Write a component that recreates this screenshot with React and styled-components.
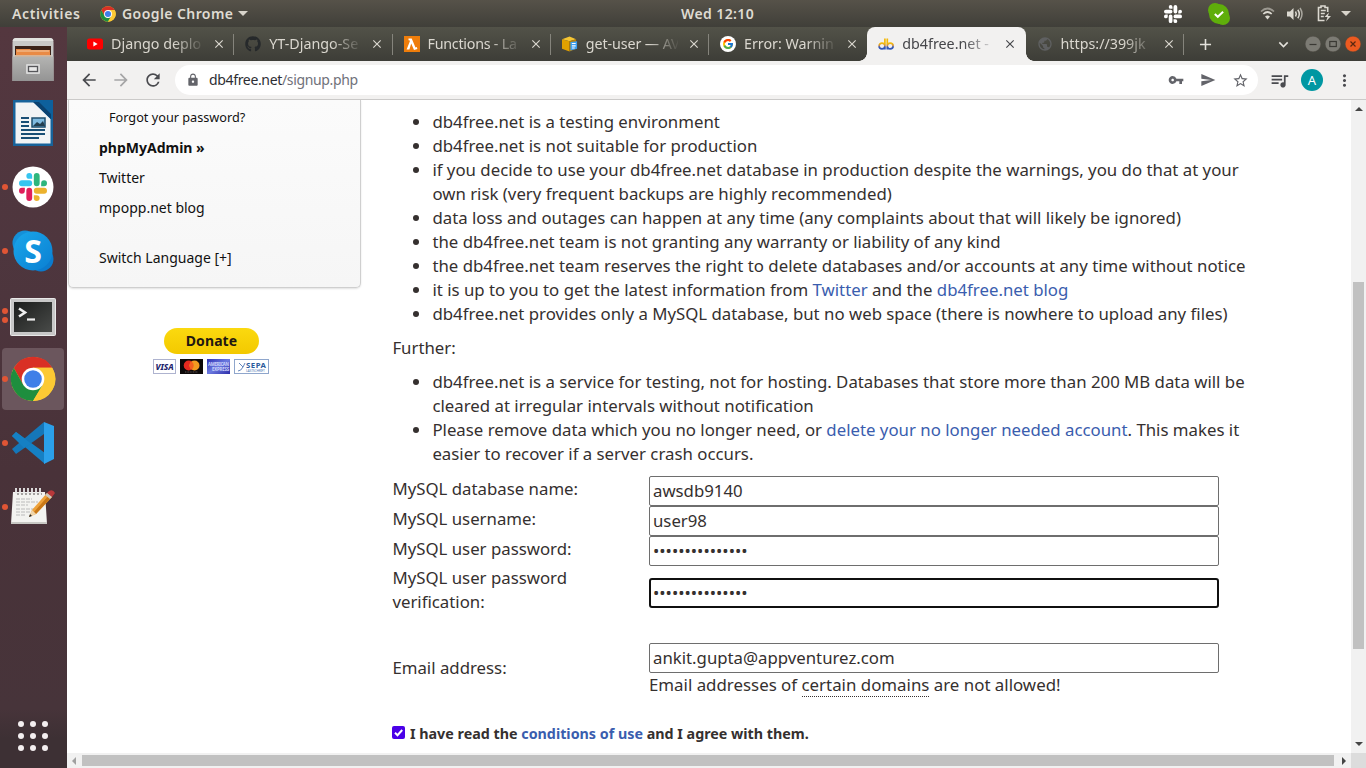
import React from "react";
import styled, { createGlobalStyle, css } from "styled-components";
import {
  MdArrowBack, MdArrowForward, MdRefresh, MdLock, MdVpnKey, MdSend, MdStarBorder,
  MdQueueMusic, MdMoreVert, MdClose, MdAdd, MdPublic, MdKeyboardArrowDown,
} from "react-icons/md";
import { FaGithub } from "react-icons/fa";
import { FcGoogle } from "react-icons/fc";

const Global = createGlobalStyle`
  *, *::before, *::after { box-sizing: border-box; }
  html, body { margin: 0; padding: 0; overflow: hidden; }
  svg { display: block; flex: none; }
`;

const Desktop = styled.div`
  width: 1366px;
  height: 768px;
  display: flex;
  flex-direction: column;
  overflow: hidden;
  font-family: "Noto Sans", sans-serif;
`;

/* ---------- system bar ---------- */
const SystemBar = styled.header`
  height: 27px;
  flex: none;
  display: grid;
  grid-template-columns: 1fr auto 1fr;
  align-items: center;
  background: linear-gradient(#565249, #403f39);
  color: #dfdbd2;
  font-size: 14px;
  line-height: 26px;
  font-weight: 600;
`;
const SystemLeft = styled.div`
  display: flex;
  align-items: center;
  padding-left: 12px;
`;
const SystemRight = styled.div`
  display: flex;
  align-items: center;
  justify-content: flex-end;
  padding-right: 15px;
`;
const Label = styled.span`
  white-space: nowrap;
  letter-spacing: ${(p) => p.$ls || 0}px;
  width: ${(p) => (p.$w ? `${p.$w}px` : "auto")};
  margin-left: ${(p) => p.$ml || 0}px;
`;
const Slot = styled.span`
  display: flex;
  flex: none;
  margin-left: ${(p) => p.$ml || 0}px;
`;

const Body = styled.div`
  flex: 1;
  display: flex;
  min-height: 0;
`;

/* ---------- dock ---------- */
const Dock = styled.nav`
  width: 67px;
  flex: none;
  display: flex;
  flex-direction: column;
  background: linear-gradient(#54373f 0%, #4e363e 30%, #493239 60%, #47343a 92%, #3d3034 96%);
`;
const DockItem = styled.div`
  height: 64px;
  display: grid;
  grid-template-columns: 2px 62px;
  align-items: center;
`;
const DockTile = styled.div`
  grid-column: 2;
  height: 62px;
  display: grid;
  grid-template-columns: 6px 50px 6px;
  align-items: center;
  justify-items: center;
  border-radius: 4px;
  background: ${(p) => (p.$active ? "#6b565d" : "transparent")};
`;
const Dots = styled.div`
  display: flex;
  flex-direction: column;
  gap: 3px;
`;
const Dot = styled.i`
  width: 6px;
  height: 6px;
  border-radius: 50%;
  background: #e05535;
`;
const AppGrid = styled.div`
  margin-top: auto;
  padding: 0 0 17px 18px;
  display: grid;
  grid-template-columns: repeat(3, 6px);
  gap: 6px;
`;
const GridDot = styled.i`
  width: 6px;
  height: 6px;
  border-radius: 50%;
  background: #f4eff0;
`;

/* ---------- browser chrome ---------- */
const Browser = styled.main`
  flex: 1;
  min-width: 0;
  display: flex;
  flex-direction: column;
  background: #fff;
`;
const TabStrip = styled.div`
  height: 34px;
  flex: none;
  display: flex;
  align-items: stretch;
  padding-left: 9px;
  background: linear-gradient(#525248, #3d3d37);
`;
const TabBox = styled.div`
  position: relative;
  width: 158.25px;
  flex: none;
  display: flex;
  align-items: center;
  padding-left: 11px;
  color: #dad7cf;
  ${(p) => p.$active && css`
    background: #f2f1f0;
    color: #45464a;
    border-radius: 8px 8px 0 0;
    &::before, &::after {
      content: "";
      position: absolute;
      bottom: 0;
      width: 8px;
      height: 8px;
    }
    &::before { left: -8px; background: radial-gradient(circle at 0 0, transparent 7.5px, #f2f1f0 8px); }
    &::after { right: -8px; background: radial-gradient(circle at 100% 0, transparent 7.5px, #f2f1f0 8px); }
  `}
`;
const TabTitle = styled.span`
  width: 92px;
  margin-left: 8px;
  white-space: nowrap;
  font-size: 14.3px;
  line-height: 22px;
  letter-spacing: ${(p) => p.$ls || 0}px;
  -webkit-mask-image: linear-gradient(90deg, #000 62px, transparent 94px);
  mask-image: linear-gradient(90deg, #000 62px, transparent 94px);
`;
const TabClose = styled(MdClose)`
  width: 14px;
  height: 14px;
  margin-left: 9px;
`;
const TabDivider = styled.i`
  width: 1px;
  height: 21px;
  margin-left: auto;
  background: #85847c;
`;
const StripTools = styled.div`
  flex: 1;
  display: flex;
  align-items: center;
  color: #e4e2dc;
  padding-left: 12px;
`;
const WindowButtons = styled.div`
  display: flex;
  gap: 4px;
  margin-left: 12px;
`;

const Toolbar = styled.div`
  height: 39px;
  flex: none;
  display: flex;
  align-items: center;
  background: #f2f1f0;
  border-bottom: 1px solid #cbcac9;
  color: #4a4b4f;
  padding: 0 12px 0 12px;
`;
const AddressBar = styled.div`
  width: 1083px;
  height: 30px;
  display: flex;
  align-items: center;
  margin-left: 12px;
  border-radius: 15px;
  background: #fff;
  padding: 0 9px 0 11px;
  color: #63646a;
`;
const Url = styled.span`
  flex: 1;
  margin-left: 9px;
  font-size: 14px;
  line-height: 22px;
  letter-spacing: -0.34px;
  color: #70717a;
`;
const Host = styled.span`
  color: #2d2e33;
`;
const Avatar = styled.span`
  width: 22px;
  height: 22px;
  border-radius: 50%;
  margin-left: 11px;
  background: #0097a2;
  color: #fff;
  font-size: 13px;
  line-height: 22px;
  text-align: center;
`;

/* ---------- web page ---------- */
const Viewport = styled.div`
  flex: 1;
  min-height: 0;
  display: grid;
  grid-template-columns: minmax(0, 1fr) 15px;
  grid-template-rows: minmax(0, 1fr) 15px;
`;
const Page = styled.div`
  display: flex;
  align-items: flex-start;
  overflow: hidden;
  padding-left: 1px;
`;
const Aside = styled.aside`
  width: 293px;
  flex: none;
`;
const Menu = styled.div`
  height: 188px;
  display: flex;
  flex-direction: column;
  align-items: flex-start;
  padding: 3px 0 0 30px;
  border: 1px solid #cfcfcf;
  border-top: 0;
  border-radius: 0 0 5px 5px;
  background: linear-gradient(#fbfbfb, #f6f6f6);
  box-shadow: 0 1px 2px rgba(0, 0, 0, 0.12);
`;
const MenuLink = styled.a`
  font-size: ${(p) => (p.$small ? 12.7 : 14)}px;
  line-height: ${(p) => (p.$small ? 29 : 30)}px;
  margin-bottom: ${(p) => (p.$small ? 1 : 0)}px;
  font-weight: ${(p) => (p.$bold ? 700 : 400)};
  padding-left: ${(p) => (p.$small ? 10 : 0)}px;
  margin-top: ${(p) => p.$mt || 0}px;
  color: #111;
`;
const Donate = styled.div`
  display: flex;
  flex-direction: column;
  align-items: center;
  padding: 40px 7px 0 0;
`;
const DonateButton = styled.button`
  width: 95px;
  height: 26px;
  border: 0;
  border-radius: 13px;
  padding: 0 0 1px 1px;
  background: linear-gradient(#fbd90f, #f3c900);
  font: 700 14px/24px "Noto Sans", sans-serif;
  letter-spacing: 0.1px;
  color: #1f1711;
`;
const Cards = styled.div`
  display: flex;
  gap: 4px;
  margin-top: 5px;
`;

const Content = styled.article`
  margin-left: 31.4px;
  width: 900px;
  flex: none;
  font-size: 16.81px;
  line-height: 24px;
  color: #35302f;
  padding-top: 10px;
`;
const Notes = styled.ul`
  margin: 0 0 10px;
  padding-left: 40px;
  white-space: nowrap;
`;
const Para = styled.p`
  margin: 0 0 10px;
`;
const Link = styled.a`
  color: #3a5dae;
`;
const FormRow = styled.div`
  display: grid;
  grid-template-columns: 256.6px 570px;
  min-height: 30px;
  align-items: ${(p) => (p.$center ? "center" : "start")};
  margin-top: ${(p) => p.$mt || 0}px;
`;
const FieldLabel = styled.label`
  padding-top: ${(p) => p.$pt || 0}px;
  padding-bottom: ${(p) => p.$pb || 0}px;
`;
const Field = styled.input`
  display: block;
  width: 570px;
  height: 30px;
  padding: 0 3px 1px;
  border: 1px solid #6e6e6e;
  border-radius: 2px;
  outline: 0;
  background: #fff;
  color: #35302f;
  font: 16.78px "Noto Sans", sans-serif;
  ${(p) => p.$focused && css`
    border: 2px solid #101010;
    border-radius: 3px;
    padding: 0 2px;
    margin-top: 5px;
  `}
`;
const Hint = styled.div`
  white-space: nowrap;
  font-size: 16.87px;
`;
const Dotted = styled.span`
  border-bottom: 1px dotted #35302f;
`;
const Agree = styled.div`
  display: flex;
  align-items: center;
  margin-top: 24px;
  padding-top: 1px;
  font-size: 14.3px;
  font-weight: 700;
`;
const Check = styled.span`
  width: 13px;
  height: 13px;
  border-radius: 2px;
  background: #4a00e8;
  margin: -3px 4.6px 0 0;
`;

/* ---------- scrollbars ---------- */
const VScroll = styled.div`
  background: #f1f1f1;
  display: flex;
  flex-direction: column;
  align-items: center;
  padding: 5px 0 5px;
`;
const VThumb = styled.i`
  width: 11px;
  height: 367px;
  background: #c1c1c1;
  margin: 169px 0 auto;
`;
const HScroll = styled.div`
  background: #f1f1f1;
  display: flex;
  align-items: center;
  padding: 0 3px;
`;
const HThumb = styled.i`
  width: 1252px;
  height: 11px;
  background: #c1c1c1;
  margin: 0 6px 0 4px;
`;
const Corner = styled.div`
  background: #dcdcdc;
`;

/* ---------- drawings ---------- */
const ChromeLogo = ({ size }) => (
  <svg width={size} height={size} viewBox="0 0 48 48">
    <circle cx="24" cy="24" r="23" fill="#fcc934" />
    <path d="M24 12.3h20.1A23 23 0 0 0 4 12.5L13.8 29.9z" fill="#d93025" />
    <path d="M13.8 29.9 4 12.5A23 23 0 0 0 24 47L34.2 29.9 24 35z" fill="#1e8e3e" />
    <path d="M24 12.3h20.2A23 23 0 0 1 24 47l10.2-17.1z" fill="#fcc934" />
    <circle cx="24" cy="24" r="11.8" fill="#fff" />
    <circle cx="24" cy="24" r="9.2" fill="#3f7fe8" />
  </svg>
);

const SlackMark = ({ size, colors }) => (
  <svg width={size} height={size} viewBox="0 0 24 24">
    <path fill={colors[0]} d="M8.8 0a2.5 2.5 0 1 0 0 5h2.5V2.5A2.5 2.5 0 0 0 8.8 0M8.8 6.3H2.5a2.5 2.5 0 0 0 0 5h6.3a2.5 2.5 0 0 0 0-5" />
    <path fill={colors[1]} d="M24 8.8a2.5 2.5 0 1 0-5 0v2.5h2.5A2.5 2.5 0 0 0 24 8.8M17.7 8.8V2.5a2.5 2.5 0 0 0-5 0v6.3a2.5 2.5 0 0 0 5 0" />
    <path fill={colors[2]} d="M15.2 24a2.5 2.5 0 1 0 0-5h-2.5v2.5a2.5 2.5 0 0 0 2.5 2.5M15.2 17.7h6.3a2.5 2.5 0 0 0 0-5h-6.3a2.5 2.5 0 0 0 0 5" />
    <path fill={colors[3]} d="M0 15.2a2.5 2.5 0 1 0 5 0v-2.5H2.5A2.5 2.5 0 0 0 0 15.2M6.3 15.2v6.3a2.5 2.5 0 0 0 5 0v-6.3a2.5 2.5 0 0 0-5 0" />
  </svg>
);

const FilesIcon = () => (
  <svg width="44" height="44" viewBox="0 0 44 44">
    <defs>
      <linearGradient id="fileFace" x1="0" y1="0" x2="0" y2="1"><stop offset="0" stopColor="#b4b4b2" /><stop offset="1" stopColor="#949494" /></linearGradient>
    </defs>
    <path d="M5 1h34q3 0 3.5 4v39h-41V5Q2 1 5 1z" fill="#c9c9c7" />
    <path d="M5 1h34q3 0 3.5 3h-41Q2 1 5 1z" fill="#e2e2df" />
    <path d="M4 9h36v11H4z" fill="#3b2218" />
    <path d="M5 12h14l1.500 1H39v5H5z" fill="#e98a45" />
    <path d="M6 14h32" stroke="#f6cba4" />
    <path d="M4 20v-2h36v2z" fill="#d8b496" />
    <path d="M1.500 19.500h41V44h-41z" fill="url(#fileFace)" />
    <rect x="15" y="27" width="14" height="10" rx="1" fill="#d8d8d8" />
    <rect x="17.500" y="29.500" width="9" height="5" fill="#e8e8e8" stroke="#56565a" strokeWidth="1.300" />
  </svg>
);
const WriterIcon = () => (
  <svg width="42" height="48" viewBox="0 0 42 48">
    <path d="M1 1h40v46H1z" fill="#17639a" />
    <path d="M3.500 3.500H22l16.500 16v25h-35z" fill="#f1f4f5" />
    <path d="M22 3.500V1h19v19h-2.500z" fill="#0d609c" />
    <path d="m21 3 18 17v-5L27 3z" fill="#0a4270" />
    <path d="M9 19h8M9 23h8M9 27h8M9 31h24M9 35h24M9 39h18" stroke="#184f75" strokeWidth="2" />
    <rect x="20" y="19" width="13" height="9" fill="#7fbbe0" stroke="#1d4d6c" strokeWidth="1.500" />
    <path d="m21 27 4-4 3 2 3-3 2 5z" fill="#233f50" />
  </svg>
);
const SlackIcon = () => (
  <svg width="42" height="42" viewBox="0 0 42 42">
    <circle cx="21" cy="21" r="20.500" fill="#fff" />
    <g transform="translate(7 7)"><SlackMark size={28} colors={["#36c5f0", "#2eb67d", "#ecb22e", "#e01e5a"]} /></g>
  </svg>
);
const SkypeIcon = () => (
  <svg width="42" height="42" viewBox="0 0 42 42">
    <defs><linearGradient id="sky" x1="0" y1="0" x2="1" y2="1"><stop offset="0" stopColor="#1aa7ea" /><stop offset="1" stopColor="#0a7fd2" /></linearGradient></defs>
    <circle cx="13" cy="13" r="12.500" fill="#1590d8" />
    <circle cx="29" cy="29" r="12.500" fill="#0b7bcd" />
    <circle cx="21" cy="21" r="19.500" fill="url(#sky)" />
    <text x="21" y="32.500" textAnchor="middle" fontFamily="Noto Sans" fontWeight="700" fontSize="32" fill="#fff">S</text>
  </svg>
);
const TerminalIcon = () => (
  <svg width="46" height="42" viewBox="0 -4 46 42">
    <defs><linearGradient id="term" x1="0" y1="0" x2="1" y2="1"><stop offset="0" stopColor="#1b1d1c" /><stop offset="1" stopColor="#494b49" /></linearGradient></defs>
    <rect x=".5" y=".5" width="45" height="37" rx="1" fill="#c8c8c8" stroke="#e9e9e9" />
    <rect x="4" y="4" width="38" height="30" fill="url(#term)" />
    <path d="m9 10.500 6 4-6 4" fill="none" stroke="#eee" strokeWidth="2.600" />
    <path d="M17 21.500h8" stroke="#eee" strokeWidth="2.200" />
  </svg>
);
const CodeIcon = () => (
  <svg width="44" height="44" viewBox="0 0 44 44">
    <path d="M1 15 5 11 34 32v11z" fill="#1580c4" />
    <path d="M1 28 33 1v12L5 33z" fill="#1577b9" />
    <path d="M1 15 5 11 20 22.500 13 27z" fill="#1580c4" />
    <path d="M33 1 43 5v33L33 43z" fill="#2ba0ea" />
  </svg>
);
const NotesIcon = () => (
  <svg width="48" height="40" viewBox="0 0 48 40">
    <path d="M4 5h32l2 32H2z" fill="#f3f3f0" />
    <path d="M2 35h36v2H2z" fill="#c8c8c4" />
    <path d="M7 1v6M11 1v6M15 1v6M19 1v6M23 1v6M27 1v6M31 1v6" stroke="#e9e9e9" strokeWidth="1.800" />
    <path d="M8 7h25" stroke="#55504f" strokeDasharray="2 2" />
    <path d="M7 12h16M7 15h22M7 18h12M7 22h20M7 25h15M7 28h10" stroke="#bbb" strokeWidth="1" strokeDasharray="4 1" />
    <path d="m20 30 3-7L38 6l5 4-16 17z" fill="#eea23a" />
    <path d="m25 25 15-17 3 2-16 17z" fill="#c97817" />
    <path d="m38 6 2-2q4-2 6 2l-3 4z" fill="#b8383a" />
    <path d="m36 8 2-2 5 4-2 2z" fill="#cfc8bd" />
    <path d="m20 30 3-7 4 4z" fill="#efd5aa" /><path d="m20 30 1-3 2 2z" fill="#222" />
  </svg>
);

const YouTubeFav = () => (
  <svg width="16" height="16" viewBox="0 0 16 16"><rect y="2.500" width="16" height="11" rx="2.500" fill="#f00" /><path d="m6.400 5.600 4.200 2.400-4.200 2.400z" fill="#fff" /></svg>
);
const LambdaFav = () => (
  <svg width="16" height="16" viewBox="0 0 16 16"><rect width="16" height="16" fill="#ee7d0b" /><path d="M4.500 2.500h3.200l3.800 9 1.300-.4.600 1.900-3.400 1L7.200 7.500 5.400 13.500H2.600l3.300-8.300-.4-.9h-1z" fill="#fff" /></svg>
);
const UserPoolFav = () => (
  <svg width="16" height="16" viewBox="0 0 17 16">
    <path d="M0 3 8 0l7 3-7 2z" fill="#f5c533" /><path d="M0 3l8 2v11l-8-3z" fill="#e1a100" /><path d="M8 5l7-2v10l-7 3z" fill="#b98209" />
    <path d="M9 6l7-1v8l-7 2z" fill="#3c9ff0" /><path d="M10.500 7.500h4M10.500 10h4M10.500 12.300h3" stroke="#fff" strokeWidth="1.200" />
  </svg>
);
const DbFav = () => (
  <svg width="16" height="16" viewBox="0 0 16 16" fill="none" strokeWidth="1.700">
    <defs><linearGradient id="dbfav" gradientUnits="userSpaceOnUse" x1="0" y1="2" x2="0" y2="14"><stop offset="0.450" stopColor="#f3b90c" /><stop offset="0.650" stopColor="#c78a50" /><stop offset="0.740" stopColor="#3157b8" /></linearGradient></defs>
    <path d="M6.900 2.500V13.500M6.900 10a2.900 2.900 0 1 0-5.800 0 2.900 2.900 0 0 0 5.800 0M9.300 2.500V13.500M9.300 10a2.900 2.900 0 1 1 5.800 0 2.900 2.900 0 0 1-5.800 0" stroke="url(#dbfav)" />
  </svg>
);
const GoogleFav = () => (
  <svg width="16" height="16" viewBox="0 0 16 16"><circle cx="8" cy="8" r="8" fill="#fff" /><g transform="translate(2 2)"><FcGoogle size={12} /></g></svg>
);

const Caret = () => <svg width="10" height="5" viewBox="0 0 10 5"><path d="M0 0h10L5 5z" fill="#d8d4cb" /></svg>;
const SkypeStatus = () => (
  <svg width="22" height="22" viewBox="0 0 22 22" fill="#5fae0b">
    <circle cx="7" cy="7" r="7" /><circle cx="15" cy="15" r="7" /><circle cx="11" cy="11" r="10" />
    <path d="m6.800 11 3 2.800 5.300-5" fill="none" stroke="#fff" strokeWidth="2" />
  </svg>
);
const Wifi = () => (
  <svg width="15" height="13" viewBox="0 0 15 13" fill="none" strokeWidth="1.700">
    <path d="M1 4.500Q7.500-1.500 14 4.500" stroke="#9b9890" /><path d="M3.300 7Q7.500 3 11.700 7" stroke="#dcd9d1" /><path d="M7.500 12.500 5 9.500q2.500-2 5 0z" fill="#dcd9d1" />
  </svg>
);
const Volume = () => (
  <svg width="16" height="14" viewBox="0 0 16 14" fill="none" stroke="#dcd9d1" strokeWidth="1.500">
    <path d="M0 4.500h3L6.500 1v12L3 9.500H0z" fill="#dcd9d1" stroke="none" /><path d="M8.500 4.500q1.600 2.500 0 5M10.800 2.700q3 4.300 0 8.600" /><path d="M13 1q4 6 0 12" stroke="#aaa79f" />
  </svg>
);
const Battery = () => (
  <svg width="15" height="17" viewBox="0 0 15 17" fill="none" stroke="#dcd9d1" strokeWidth="1.600">
    <path d="M7.500 15.500H1.500V2.500H4V1h4v1.500h2.700V7M3.800 5.500h5M3.800 8.500h4M3.800 11.500h3" /><path d="m12 7.500-4.500 4.500h3L9 16.500l5-5.500h-3z" fill="#dcd9d1" stroke="none" />
  </svg>
);
const WinButton = ({ kind }) => (
  <svg width="16" height="16" viewBox="0 0 16 16" fill="none" stroke={kind === "close" ? "#5a2710" : "#3a3934"} strokeWidth="1.200">
    <circle cx="8" cy="8" r="7.800" fill={kind === "close" ? "#ec5a20" : "#7c7b74"} stroke="#44423b" strokeWidth=".3" />
    {kind === "min" && <path d="M4.500 8.500h7" />}
    {kind === "max" && <rect x="4.800" y="5.500" width="6.500" height="5" />}
    {kind === "close" && <path d="m5.500 5.500 5 5m0-5-5 5" />}
  </svg>
);
const Arrow = ({ dir, color = "#454545" }) => {
  const shapes = { up: "M0 6 4 2l4 4z", down: "M0 2h8L4 6z", left: "M6 0v8L2 4z", right: "M2 0v8l4-4z" };
  return <svg width="8" height="8" viewBox="0 0 8 8"><path d={shapes[dir]} fill={color} /></svg>;
};

const VisaCard = () => (
  <svg width="23" height="15" viewBox="0 0 23 15"><rect x=".5" y=".5" width="22" height="14" fill="#fff" stroke="#aeb3cf" /><text x="11.500" y="10.800" textAnchor="middle" fontFamily="Noto Sans" fontSize="8.300" fontStyle="italic" fontWeight="800" fill="#22246d">VISA</text></svg>
);
const MasterCard = () => (
  <svg width="23" height="15" viewBox="0 0 23 15"><rect width="23" height="15" fill="#0c0808" /><circle cx="8.700" cy="6.500" r="5" fill="#e4291f" /><circle cx="14.500" cy="6.500" r="5" fill="#f49a20" /><path d="M11.600 2.400a5 5 0 0 1 0 8.200 5 5 0 0 1 0-8.200" fill="#f3601f" /><path d="M5 13h13" stroke="#716767" strokeWidth=".8" strokeDasharray="1 .6" /></svg>
);
const AmexCard = () => (
  <svg width="23" height="15" viewBox="0 0 23 15"><defs><linearGradient id="amex" x1="0" y1="0" x2="1" y2="1"><stop offset="0" stopColor="#2c30b4" /><stop offset=".5" stopColor="#6c7ae0" /><stop offset="1" stopColor="#2c2ca8" /></linearGradient></defs><rect width="23" height="15" fill="url(#amex)" /><g fontFamily="Noto Sans" fontWeight="700" fontSize="4.300" fill="#ccd4fa"><text x="1" y="6.800" textLength="21">AMERICAN</text><text x="5" y="11.500" textLength="17">EXPRESS</text></g></svg>
);
const SepaCard = () => (
  <svg width="35" height="15" viewBox="0 0 35 15"><rect x=".5" y=".5" width="34" height="14" fill="#fff" stroke="#8fa6cc" /><path d="m5 4 4 4M4 12q3 0 5-4l2-4" fill="none" stroke="#6486bd" /><text x="12" y="9" fontFamily="Noto Sans" fontWeight="700" fontSize="7.800" fill="#2a5a9c" textLength="20">SEPA</text><text x="12" y="13.200" fontFamily="Noto Sans" fontSize="3.400" fill="#5b80b8" textLength="19">LASTSCHRIFT</text></svg>
);

const dockApps = [
  { name: "files", icon: <FilesIcon />, windows: 0 },
  { name: "writer", icon: <WriterIcon />, windows: 0 },
  { name: "slack", icon: <SlackIcon />, windows: 1 },
  { name: "skype", icon: <SkypeIcon />, windows: 1 },
  { name: "terminal", icon: <TerminalIcon />, windows: 2 },
  { name: "chrome", icon: <ChromeLogo size={46} />, windows: 1, active: true },
  { name: "code", icon: <CodeIcon />, windows: 1 },
  { name: "notes", icon: <NotesIcon />, windows: 1 },
];

const tabs = [
  { icon: <YouTubeFav />, title: "Django deplo", divider: true },
  { icon: <FaGithub size={16} color="#26292b" />, title: "YT-Django-Se", divider: true },
  { icon: <LambdaFav />, title: "Functions - La", divider: true, ls: -0.25 },
  { icon: <UserPoolFav />, title: "get-user — AV", divider: true, ls: -0.1 },
  { icon: <GoogleFav />, title: "Error: Warnin" },
  { icon: <DbFav />, title: "db4free.net - ", active: true },
  { icon: <MdPublic size={16} color="#5f6061" />, title: "https://399jk", divider: true },
];

const fields = [
  { label: "MySQL database name:", value: "awsdb9140", type: "text" },
  { label: "MySQL username:", value: "user98", type: "text" },
  { label: "MySQL user password:", value: "passwordsecret1", type: "password" },
];

export default function App() {
  return (
    <Desktop>
      <Global />
      <SystemBar>
        <SystemLeft>
          <Label $w={68} $ls={0.6}>Activities</Label>
          <Slot $ml={20}><ChromeLogo size={16} /></Slot>
          <Label $ml={6} $w={110} $ls={0.42}>Google Chrome</Label>
          <Slot $ml={6}><Caret /></Slot>
        </SystemLeft>
        <Label $w={73} $ml={69} $ls={0.4}>Wed 12:10</Label>
        <SystemRight>
          <Slot><SlackMark size={18} colors={["#fff", "#fff", "#fff", "#fff"]} /></Slot>
          <Slot $ml={26}><SkypeStatus /></Slot>
          <Slot $ml={30}><Wifi /></Slot>
          <Slot $ml={12}><Volume /></Slot>
          <Slot $ml={14}><Battery /></Slot>
          <Slot $ml={9}><Caret /></Slot>
        </SystemRight>
      </SystemBar>
      <Body>
        <Dock>
          {dockApps.map((app) => (
            <DockItem key={app.name}>
              <DockTile $active={app.active}>
                <Dots>{Array.from({ length: app.windows }, (_, i) => <Dot key={i} />)}</Dots>
                {app.icon}
              </DockTile>
            </DockItem>
          ))}
          <AppGrid>{Array.from({ length: 9 }, (_, i) => <GridDot key={i} />)}</AppGrid>
        </Dock>
        <Browser>
          <TabStrip>
            {tabs.map((tab) => (
              <TabBox key={tab.title} $active={tab.active}>
                {tab.icon}
                <TabTitle $ls={tab.ls}>{tab.title}</TabTitle>
                <TabClose />
                {tab.divider && <TabDivider />}
              </TabBox>
            ))}
            <StripTools>
              <MdAdd size={19} />
              <Slot $ml={59}><MdKeyboardArrowDown size={19} /></Slot>
              <WindowButtons>
                <WinButton kind="min" />
                <WinButton kind="max" />
                <WinButton kind="close" />
              </WindowButtons>
            </StripTools>
          </TabStrip>
          <Toolbar>
            <MdArrowBack size={20} />
            <Slot $ml={12}><MdArrowForward size={20} color="#a5a5a6" /></Slot>
            <Slot $ml={12}><MdRefresh size={20} /></Slot>
            <AddressBar>
              <MdLock size={14} />
              <Url><Host>db4free.net</Host>/signup.php</Url>
              <MdVpnKey size={16} />
              <Slot $ml={16}><MdSend size={16} /></Slot>
              <Slot $ml={16}><MdStarBorder size={17} /></Slot>
            </AddressBar>
            <Slot $ml={11}><MdQueueMusic size={21} /></Slot>
            <Avatar>A</Avatar>
            <Slot $ml={12}><MdMoreVert size={19} /></Slot>
          </Toolbar>
          <Viewport>
            <Page>
              <Aside>
                <Menu>
                  <MenuLink $small>Forgot your password?</MenuLink>
                  <MenuLink $bold>phpMyAdmin »</MenuLink>
                  <MenuLink>Twitter</MenuLink>
                  <MenuLink>mpopp.net blog</MenuLink>
                  <MenuLink $mt={20}>Switch Language [+]</MenuLink>
                </Menu>
                <Donate>
                  <DonateButton>Donate</DonateButton>
                  <Cards><VisaCard /><MasterCard /><AmexCard /><SepaCard /></Cards>
                </Donate>
              </Aside>
              <Content>
                <Notes>
                  <li>db4free.net is a testing environment</li>
                  <li>db4free.net is not suitable for production</li>
                  <li>if you decide to use your db4free.net database in production despite the warnings, you do that at your<br />own risk (very frequent backups are highly recommended)</li>
                  <li>data loss and outages can happen at any time (any complaints about that will likely be ignored)</li>
                  <li>the db4free.net team is not granting any warranty or liability of any kind</li>
                  <li>the db4free.net team reserves the right to delete databases and/or accounts at any time without notice</li>
                  <li>it is up to you to get the latest information from <Link>Twitter</Link> and the <Link>db4free.net blog</Link></li>
                  <li>db4free.net provides only a MySQL database, but no web space (there is nowhere to upload any files)</li>
                </Notes>
                <Para>Further:</Para>
                <Notes>
                  <li>db4free.net is a service for testing, not for hosting. Databases that store more than 200 MB data will be<br />cleared at irregular intervals without notification</li>
                  <li>Please remove data which you no longer need, or <Link>delete your no longer needed account</Link>. This makes it<br />easier to recover if a server crash occurs.</li>
                </Notes>
                {fields.map((f) => (
                  <FormRow key={f.label}>
                    <FieldLabel $pt={1}>{f.label}</FieldLabel>
                    <Field type={f.type} defaultValue={f.value} />
                  </FormRow>
                ))}
                <FormRow $center>
                  <FieldLabel>MySQL user password<br />verification:</FieldLabel>
                  <Field type="password" defaultValue="passwordsecret1" $focused />
                </FormRow>
                <FormRow $center $mt={29}>
                  <FieldLabel $pb={4}>Email address:</FieldLabel>
                  <div>
                    <Field type="text" defaultValue="ankit.gupta@appventurez.com" />
                    <Hint>Email addresses of <Dotted>certain domains</Dotted> are not allowed!</Hint>
                  </div>
                </FormRow>
                <Agree>
                  <Check><svg width="13" height="13" viewBox="0 0 13 13"><path d="m3 6.700 2.500 2.500L10.200 4" fill="none" stroke="#fff" strokeWidth="2" /></svg></Check>
                  <span>I have read the <Link>conditions of use</Link> and I agree with them.</span>
                </Agree>
              </Content>
            </Page>
            <VScroll><Arrow dir="up" /><VThumb /><Arrow dir="down" /></VScroll>
            <HScroll><Arrow dir="left" color="#a0a0a0" /><HThumb /><Arrow dir="right" /></HScroll>
            <Corner />
          </Viewport>
        </Browser>
      </Body>
    </Desktop>
  );
}
